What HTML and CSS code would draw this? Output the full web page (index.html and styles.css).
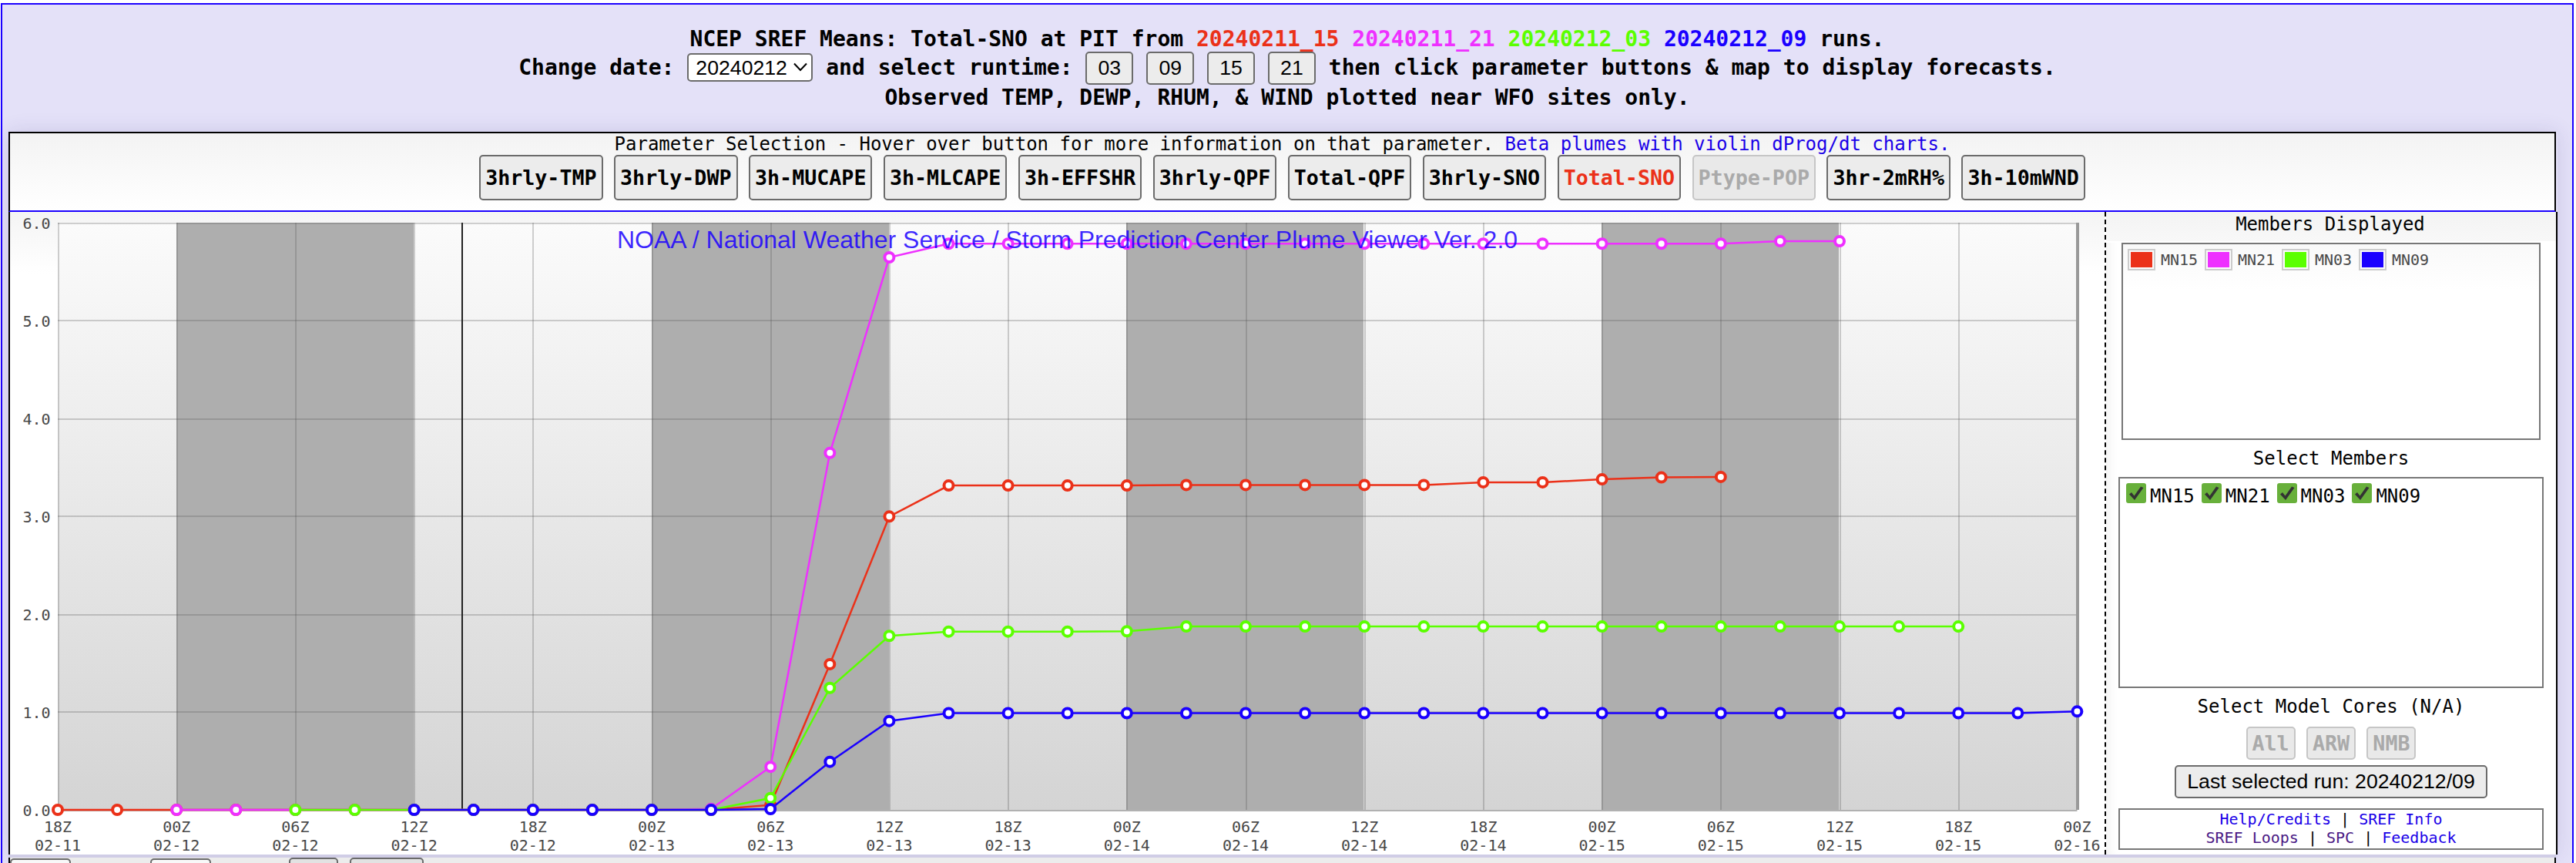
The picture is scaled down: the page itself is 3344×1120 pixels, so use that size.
FILE: index.html
```html
<!DOCTYPE html>
<html lang="en">
<head>
    <meta charset="UTF-8">
    <title>SREF Plume Viewer</title>
    <link rel="stylesheet" href="styles.css">
</head>
<body>
    <div class="page">
        <div class="header">
            <div>NCEP SREF Means: Total-SNO at PIT from <span class="red">20240211_15</span> <span class="magenta">20240211_21</span> <span class="green">20240212_03</span> <span class="blue">20240212_09</span> runs.</div>
            <div>Change date: <span class="select">20240212<svg class="arrow" viewBox="0 0 18 12"><path d="M1 1.5 L9 10 L17 1.5"/></svg></span> and select runtime: <button>03</button> <button>09</button> <button>15</button> <button>21</button> then click parameter buttons &amp; map to display forecasts.</div>
            <div>Observed TEMP, DEWP, RHUM, &amp; WIND plotted near WFO sites only.</div>
        </div>

        <div class="main">
            <div class="params">
                <div class="params-title">Parameter Selection - Hover over button for more information on that parameter. <a href="#">Beta plumes with violin dProg/dt charts.</a></div>
                <div class="params-buttons">
                    <button class="param">3hrly-TMP</button>
                    <button class="param">3hrly-DWP</button>
                    <button class="param">3h-MUCAPE</button>
                    <button class="param">3h-MLCAPE</button>
                    <button class="param">3h-EFFSHR</button>
                    <button class="param">3hrly-QPF</button>
                    <button class="param">Total-QPF</button>
                    <button class="param">3hrly-SNO</button>
                    <button class="param red">Total-SNO</button>
                    <button class="param" disabled>Ptype-POP</button>
                    <button class="param">3hr-2mRH%</button>
                    <button class="param">3h-10mWND</button>
                </div>
            </div>

            <div class="content">
                <div class="chart">
                    <svg id="plot" width="2719" height="834" viewBox="13 275 2719 834"></svg>
                </div>
                <div class="side">
                    <div class="side-title first">Members Displayed</div>
                    <div class="legend">
                        <span class="item"><i class="swatch bg-red"></i>MN15</span>
                        <span class="item"><i class="swatch bg-magenta"></i>MN21</span>
                        <span class="item"><i class="swatch bg-green"></i>MN03</span>
                        <span class="item"><i class="swatch bg-blue"></i>MN09</span>
                    </div>
                    <div class="side-title">Select Members</div>
                    <div class="members">
                        <span class="member"><svg class="check" viewBox="0 0 26 26"><rect width="26" height="26" rx="3"/><path d="M4 14.5 L7 12 L10.5 16.5 L19 4.5 L22.5 6 L11 22 Z"/></svg>MN15</span>
                        <span class="member"><svg class="check" viewBox="0 0 26 26"><rect width="26" height="26" rx="3"/><path d="M4 14.5 L7 12 L10.5 16.5 L19 4.5 L22.5 6 L11 22 Z"/></svg>MN21</span>
                        <span class="member"><svg class="check" viewBox="0 0 26 26"><rect width="26" height="26" rx="3"/><path d="M4 14.5 L7 12 L10.5 16.5 L19 4.5 L22.5 6 L11 22 Z"/></svg>MN03</span>
                        <span class="member"><svg class="check" viewBox="0 0 26 26"><rect width="26" height="26" rx="3"/><path d="M4 14.5 L7 12 L10.5 16.5 L19 4.5 L22.5 6 L11 22 Z"/></svg>MN09</span>
                    </div>
                    <div class="side-title cores-title">Select Model Cores (N/A)</div>
                    <div class="cores">
                        <button class="core" disabled>All</button>
                        <button class="core" disabled>ARW</button>
                        <button class="core" disabled>NMB</button>
                    </div>
                    <button class="last-run">Last selected run: 20240212/09</button>
                    <div class="links">
                        <div><a href="#">Help/Credits</a> | <a href="#">SREF Info</a></div>
                        <div><a href="#" class="seen">SREF Loops</a> | <a href="#" class="seen">SPC</a> | <a href="#">Feedback</a></div>
                    </div>
                </div>
            </div>
        </div>

        <div class="footer">
            <span class="control light"></span>
            <span class="control light second"></span>
            <span class="control small"></span>
            <span class="control wide"></span>
        </div>
    </div>

    <script>
        // x is the 3-hour step since 18Z 02-11, y is inches of snow
        const X0 = 75, STEP = 77.1, Y0 = 1051, UNIT = 126.9, STEPS = 34;
        const X = i => X0 + i * STEP;
        const Y = v => Y0 - v * UNIT;
        const fill = (n, v) => Array(n).fill(v);

        const series = [
            { color: '#eb3119', start: 0, data: [...fill(12, 0), 0.05, 1.49, 3.0, ...fill(4, 3.317), ...fill(5, 3.322), 3.35, 3.35, 3.38, 3.4, 3.405] },
            { color: '#ee30ff', start: 2, data: [...fill(9, 0), 0.01, 0.44, 3.65, 5.65, ...fill(14, 5.79), 5.815, 5.815] },
            { color: '#5bff00', start: 4, data: [...fill(8, 0), 0.12, 1.247, 1.779, ...fill(3, 1.823), 1.826, ...fill(14, 1.875)] },
            { color: '#1a00ff', start: 6, data: [...fill(6, 0), 0.008, 0.491, 0.909, ...fill(19, 0.989), 1.006] }
        ];

        let out = '<defs><linearGradient id="bg" x1="0" y1="0" x2="0" y2="1">' +
            '<stop offset="0" stop-color="#fbfbfb"/><stop offset="1" stop-color="#d4d4d4"/></linearGradient></defs>';
        out += `<rect x="${X0}" y="289" width="${STEPS * STEP}" height="764" fill="url(#bg)"/>`;

        // night bands, 00Z to 12Z
        for (let i = 2; i < STEPS - 2; i += 8) {
            out += `<rect x="${Math.floor(X(i))}" y="289" width="308" height="762" fill="#aeaeae"/>`;
        }

        // grid
        for (let v = 0; v <= 6; v++) {
            const y = [1052, 924, 798, 670, 544, 416, 290][v];
            out += `<rect class="grid" x="${X0}" y="${y - 1}" width="${STEPS * STEP}" height="2"/>`;
            out += `<text class="tick" x="65.5" y="${Y(v) + 7.5}" text-anchor="end">${v}.0</text>`;
        }
        for (let i = 0; i <= STEPS; i += 2) {
            const hour = (18 + i * 3) % 24;
            const day = 11 + Math.floor((18 + i * 3) / 24);
            out += `<rect class="grid" x="${Math.floor(X(i))}" y="289" width="2" height="762"/>`;
            out += `<text class="tick" x="${X(i)}" y="1080" text-anchor="middle">${String(hour).padStart(2, '0')}Z</text>`;
            out += `<text class="tick" x="${X(i)}" y="1104" text-anchor="middle">02-${day}</text>`;
        }
        out += '<rect x="2695" y="289" width="4" height="762" fill="#999"/>';

        // current time
        out += '<rect x="599" y="289" width="2" height="762" fill="#222"/>';

        series.forEach(s => {
            const pts = s.data.map((v, i) => [X(s.start + i), Y(v)]);
            out += `<polyline points="${pts.map(p => p.join(',')).join(' ')}" fill="none" stroke="${s.color}" stroke-width="2.5"/>`;
            pts.forEach(p => {
                out += `<circle cx="${p[0]}" cy="${p[1]}" r="6" fill="#fff" stroke="${s.color}" stroke-width="4"/>`;
            });
        });

        out += '<text class="plot-title" x="1385.5" y="322" text-anchor="middle">NOAA / National Weather Service / Storm Prediction Center Plume Viewer Ver. 2.0</text>';
        document.getElementById('plot').innerHTML = out;
    </script>
</body>
</html>
```
FILE: styles.css
```css
* {
    box-sizing: border-box;
}

body {
    margin: 0;
    height: 1120px;
    overflow: hidden;
    background: #fff;
    font-family: "DejaVu Sans Mono", monospace;
    font-size: 24px;
    color: #000;
}

.page {
    width: 3340px;
    height: 1140px;
    margin: 4px 0 0 1px;
    border: 2px solid #1a00ff;
    background: #e4e1f8;
}

.header {
    height: 165px;
    padding-top: 28px;
    text-align: center;
    font-size: 28px;
    font-weight: bold;
    white-space: nowrap;
}

.red { color: #eb3119; }
.magenta { color: #ee30ff; }
.green { color: #5bff00; }
.blue { color: #1a00ff; }
.bg-red { background: #eb3119; }
.bg-magenta { background: #ee30ff; }
.bg-green { background: #5bff00; }
.bg-blue { background: #1a00ff; }

a {
    color: #1a00e8;
    text-decoration: none;
}

a.seen {
    color: #4b1a85;
}

button {
    margin: 0;
    padding: 4px 14px;
    border: 2px solid #6b6b6b;
    border-radius: 5px;
    background: #ececec;
    color: #000;
    font-family: "Liberation Sans", Arial, sans-serif;
    font-size: 26.67px;
}

.header button {
    width: 62px;
    height: 43px;
    padding: 4px 0;
}

.select {
    display: inline-block;
    width: 163px;
    height: 37px;
    padding-left: 9px;
    border: 2px solid #6b6b6b;
    border-radius: 5px;
    background: #fff;
    font-family: "Liberation Sans", Arial, sans-serif;
    font-size: 26.67px;
    font-weight: normal;
    line-height: 34px;
    text-align: left;
}

.arrow {
    width: 18px;
    height: 12px;
    margin-left: 8px;
    vertical-align: 4px;
    fill: none;
    stroke: #000;
    stroke-width: 2;
}

.main {
    width: 3309px;
    margin-left: 8px;
    box-shadow: 0 0 24px rgba(60, 50, 120, 0.14);
}

.params {
    width: 3307px;
    height: 104px;
    border: 2px solid #000;
    border-bottom: 2px solid #1a00ff;
    background: linear-gradient(#f3f3f3, #fff);
    text-align: center;
    white-space: nowrap;
}

.params-title {
    height: 28px;
    line-height: 29px;
}

.params-buttons {
    display: flex;
    justify-content: center;
    gap: 14.45px;
}

.param {
    width: 160.5px;
    height: 59px;
    padding: 0;
    font-family: "DejaVu Sans Mono", monospace;
    font-weight: bold;
}

.param.red {
    color: #eb3119;
}

button:disabled {
    border-color: #c6c6c6;
    background: #e9e9e9;
    color: #aaa;
}

.content {
    display: flex;
    height: 834px;
    border-left: 2px solid #000;
    border-right: 2px solid #000;
    background: #fff;
}

.chart {
    width: 2719px;
    background: linear-gradient(#f4f4f4, #fff 80px);
}

.chart svg {
    display: block;
}

.grid {
    fill: #545454;
    fill-opacity: 0.27;
}

.tick {
    font-size: 20px;
    fill: #484848;
}

.plot-title {
    font-family: "Liberation Sans", Arial, sans-serif;
    font-size: 32px;
    fill: #1a00ff;
    fill-opacity: 0.85;
}

.side {
    flex: 1;
    display: flex;
    flex-direction: column;
    align-items: center;
    border-left: 2px dashed #000;
    box-shadow: inset 12px 0 14px -8px rgba(0, 0, 0, 0.06);
}

.side-title {
    height: 48px;
    padding-top: 10px;
    line-height: 28px;
}

.side-title.first {
    align-self: stretch;
    height: 40px;
    padding: 2px 2px 0 0;
    border-bottom: 2px solid #fff;
    background: linear-gradient(#f3f3f3, #f8f8f8);
    text-align: center;
}

.side-title.cores-title {
    height: 50px;
    padding-top: 10px;
}

.legend {
    display: flex;
    align-items: flex-start;
    width: 544px;
    height: 256px;
    padding: 6px;
    border: 2px solid #777;
    background: linear-gradient(#f9f9f9, #fff 60px);
}

.item {
    display: flex;
    align-items: center;
    width: 100px;
    color: #484848;
    font-size: 20px;
}

.swatch {
    width: 36px;
    height: 28px;
    margin-right: 7px;
    padding: 2px;
    border: 2px solid #ccc;
    background-clip: content-box;
}

.members {
    display: flex;
    align-items: flex-start;
    width: 552px;
    height: 274px;
    padding: 6px 8px;
    border: 2px solid #777;
}

.member {
    display: flex;
    width: 97.8px;
    line-height: 35px;
}

.check {
    width: 26px;
    height: 26px;
    margin-right: 5px;
}

.check rect {
    fill: #68b03b;
}

.check path {
    fill: #333;
}

.cores {
    display: flex;
    gap: 14.45px;
    height: 50px;
}

.core {
    width: 64px;
    height: 43px;
    padding: 0;
    font-family: "DejaVu Sans Mono", monospace;
    font-weight: bold;
}

.last-run {
    width: 406px;
    height: 43px;
    padding: 0;
    white-space: nowrap;
}

.links {
    width: 552px;
    height: 54px;
    margin-top: 13px;
    border: 2px solid #777;
    font-size: 20px;
    line-height: 24px;
    text-align: center;
}

.footer {
    display: flex;
    width: 3307px;
    height: 40px;
    margin: 4px 0 0 8px;
    border-left: 2px solid #000;
    border-right: 2px solid #000;
    background: #ececec;
    box-shadow: 0 -4px 0 #d0cde6;
}

.control {
    width: 79px;
    height: 38px;
    border: 2px solid #6b6b6b;
    border-radius: 5px;
    background: #e2e2e2;
}

.control.light {
    margin-top: 1px;
    background: #f8f8f8;
}

.control.second {
    margin-left: 103px;
}

.control.small {
    width: 64px;
    margin-left: 101px;
}

.control.wide {
    width: 96px;
    margin-left: 15px;
}
```
